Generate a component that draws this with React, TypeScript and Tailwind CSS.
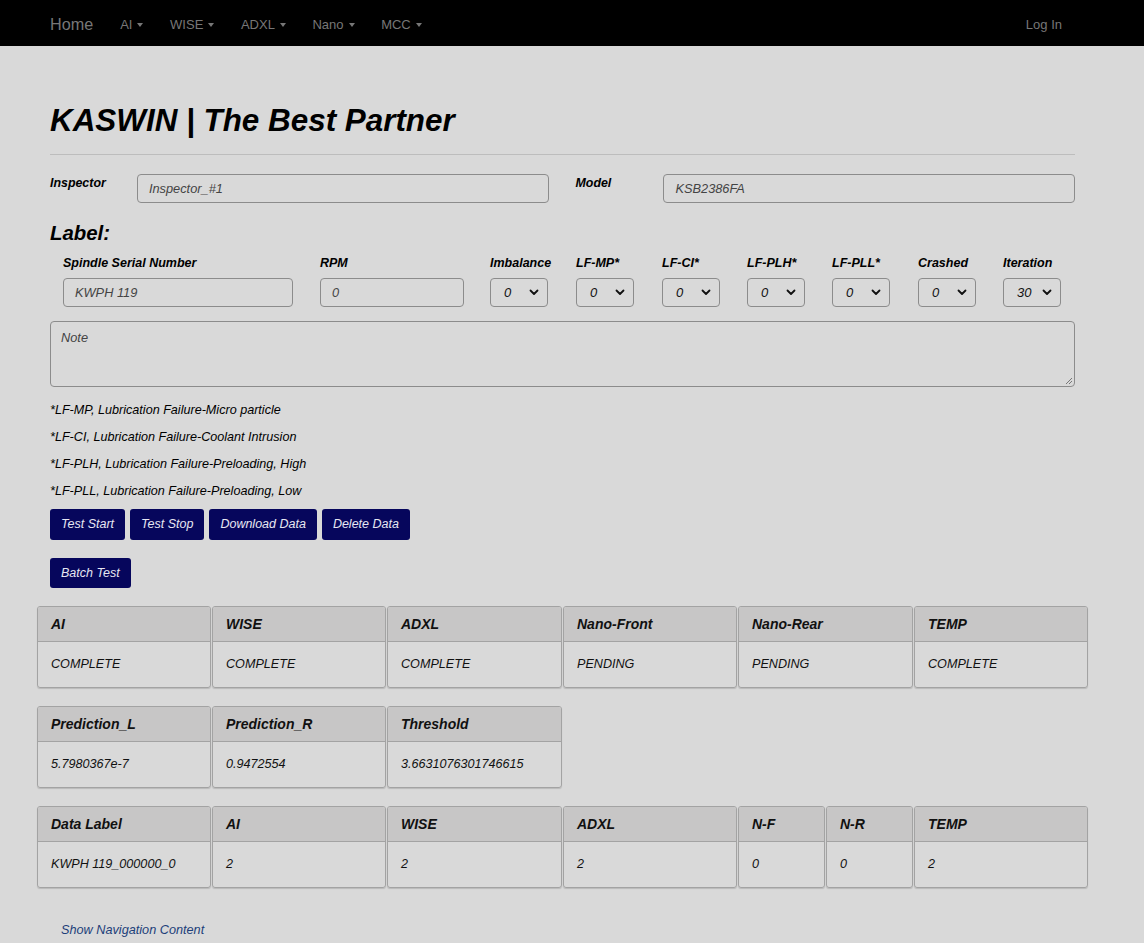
import React from "react";

const font = { fontFamily: '"Liberation Sans", Arial, Helvetica, sans-serif' };

function Caret() {
  return (
    <span className="ml-[5px] inline-block h-0 w-0 border-l-[3px] border-r-[3px] border-t-[4px] border-l-transparent border-r-transparent border-t-[#777] align-middle" />
  );
}

function Chevron() {
  return (
    <svg width="10" height="7" viewBox="0 0 10 7" className="shrink-0">
      <path d="M1.5 1.5 L5 5 L8.5 1.5" fill="none" stroke="#111" strokeWidth="1.8" strokeLinecap="round" strokeLinejoin="round" />
    </svg>
  );
}

function Select({ value }: { value: string }) {
  return (
    <div className="flex h-[29px] w-[58px] items-center justify-between rounded-[4px] border border-[#8c8c8c] pl-[13px] pr-[8px] text-[13px] italic text-[#111]">
      <span>{value}</span>
      <Chevron />
    </div>
  );
}

function TextBox({ value, w }: { value: string; w: string }) {
  return (
    <div className={`flex h-[29px] items-center rounded-[4px] border border-[#8c8c8c] px-[11px] text-[12.8px] italic text-[#444] ${w}`}>
      {value}
    </div>
  );
}

type Col = { h: string; v: string; w: string };

function DataTable({ cols }: { cols: Col[] }) {
  return (
    <div className="flex gap-[1px]">
      {cols.map((c, i) => (
        <div
          key={i}
          className={`flex h-[82px] flex-col overflow-hidden rounded-[3px] border border-[#a3a3a3] shadow-[0_1px_1px_rgba(0,0,0,0.15)] ${c.w}`}
        >
          <div className="flex h-[35px] items-center border-b border-[#a3a3a3] bg-[#c7c6c6] px-[13px] text-[14px] font-bold italic text-[#111]">
            {c.h}
          </div>
          <div className="flex flex-1 items-center px-[13px] text-[12.6px] italic text-[#111]">{c.v}</div>
        </div>
      ))}
    </div>
  );
}

const W = "w-[174px]";

export default function App() {
  return (
    <div className="min-h-[943px] bg-[#d9d9d9]" style={font}>
      <nav className="flex h-[46px] items-center bg-black pl-[50px] pr-[82px] pt-[3px] text-[#777]">
        <span className="text-[16.2px]">Home</span>
        <div className="ml-[27px] flex items-center gap-[26.6px] text-[13px]">
          <span>AI<Caret /></span>
          <span>WISE<Caret /></span>
          <span>ADXL<Caret /></span>
          <span>Nano<Caret /></span>
          <span>MCC<Caret /></span>
        </div>
        <span className="ml-auto text-[13px]">Log In</span>
      </nav>

      <div className="pl-[50px] pr-[69px]">
        <h1 className="mt-[57px] text-[31.4px] leading-[35px] font-bold italic text-black">KASWIN | The Best Partner</h1>
        <div className="mt-[16px] h-px bg-[#bdbdbd]" />

        <div className="mt-[19px] flex">
          <div className="w-[87px] pt-[2px] text-[12.4px] font-bold italic leading-[14px] text-black">Inspector</div>
          <TextBox value="Inspector_#1" w="w-[412px]" />
          <div className="ml-[27px] w-[88px] pt-[2px] text-[12.4px] font-bold italic leading-[14px] text-black">Model</div>
          <TextBox value="KSB2386FA" w="w-[412px]" />
        </div>

        <div className="mt-[18px] text-[20.4px] font-bold italic leading-[24px] text-black">Label:</div>

        <div className="ml-[13px] mt-[11px] grid grid-cols-[257px_170px_86px_86px_85px_85px_86px_85px_85px]">
          {[
            ["Spindle Serial Number", <TextBox key="a" value="KWPH 119" w="w-[230px]" />],
            ["RPM", <TextBox key="b" value="0" w="w-[144px]" />],
            ["Imbalance", <Select key="c" value="0" />],
            ["LF-MP*", <Select key="d" value="0" />],
            ["LF-CI*", <Select key="e" value="0" />],
            ["LF-PLH*", <Select key="f" value="0" />],
            ["LF-PLL*", <Select key="g" value="0" />],
            ["Crashed", <Select key="h" value="0" />],
            ["Iteration", <Select key="i" value="30" />],
          ].map(([label, ctl], i) => (
            <div key={i} className="flex flex-col">
              <div className="h-[16px] text-[12.5px] font-bold italic leading-[14px] text-black">{label as string}</div>
              <div className="mt-[6px]">{ctl as React.ReactNode}</div>
            </div>
          ))}
        </div>

        <div className="relative mt-[14px] h-[66px] rounded-[4px] border border-[#8c8c8c] px-[10px] pt-[6px] text-[12.8px] italic text-[#444]">
          Note
          <svg width="9" height="9" viewBox="0 0 9 9" className="absolute bottom-[1px] right-[1px]">
            <path d="M8 2 L2 8 M8 5 L5 8" stroke="#777" strokeWidth="1" />
          </svg>
        </div>

        <div className="mt-[10px] flex flex-col text-[12.6px] italic leading-[27px] text-black">
          <div>*LF-MP, Lubrication Failure-Micro particle</div>
          <div>*LF-CI, Lubrication Failure-Coolant Intrusion</div>
          <div>*LF-PLH, Lubrication Failure-Preloading, High</div>
          <div>*LF-PLL, Lubrication Failure-Preloading, Low</div>
        </div>

        <div className="mt-[4px] flex gap-[5px]">
          {["Test Start", "Test Stop", "Download Data", "Delete Data"].map((t) => (
            <div
              key={t}
              className="flex h-[31px] items-center rounded-[3px] bg-[#06065c] px-[11px] text-[12.5px] italic text-[#e6e6f2]"
            >
              {t}
            </div>
          ))}
        </div>
        <div className="mt-[18px] flex">
          <div className="flex h-[30px] items-center rounded-[3px] bg-[#06065c] px-[11px] text-[12.5px] italic text-[#e6e6f2]">
            Batch Test
          </div>
        </div>
      </div>

      <div className="ml-[37px] mt-[18px] flex flex-col gap-[18px]">
        <DataTable
          cols={[
            { h: "AI", v: "COMPLETE", w: W },
            { h: "WISE", v: "COMPLETE", w: W },
            { h: "ADXL", v: "COMPLETE", w: "w-[175px]" },
            { h: "Nano-Front", v: "PENDING", w: W },
            { h: "Nano-Rear", v: "PENDING", w: "w-[175px]" },
            { h: "TEMP", v: "COMPLETE", w: W },
          ]}
        />
        <DataTable
          cols={[
            { h: "Prediction_L", v: "5.7980367e-7", w: W },
            { h: "Prediction_R", v: "0.9472554", w: W },
            { h: "Threshold", v: "3.6631076301746615", w: "w-[175px]" },
          ]}
        />
        <DataTable
          cols={[
            { h: "Data Label", v: "KWPH 119_000000_0", w: W },
            { h: "AI", v: "2", w: W },
            { h: "WISE", v: "2", w: "w-[175px]" },
            { h: "ADXL", v: "2", w: W },
            { h: "N-F", v: "0", w: "w-[87px]" },
            { h: "N-R", v: "0", w: "w-[87px]" },
            { h: "TEMP", v: "2", w: W },
          ]}
        />
      </div>

      <div className="ml-[61px] mt-[34px] pb-[6px] text-[12.7px] italic leading-[16px] text-[#1d3f7a]">Show Navigation Content</div>
    </div>
  );
}
